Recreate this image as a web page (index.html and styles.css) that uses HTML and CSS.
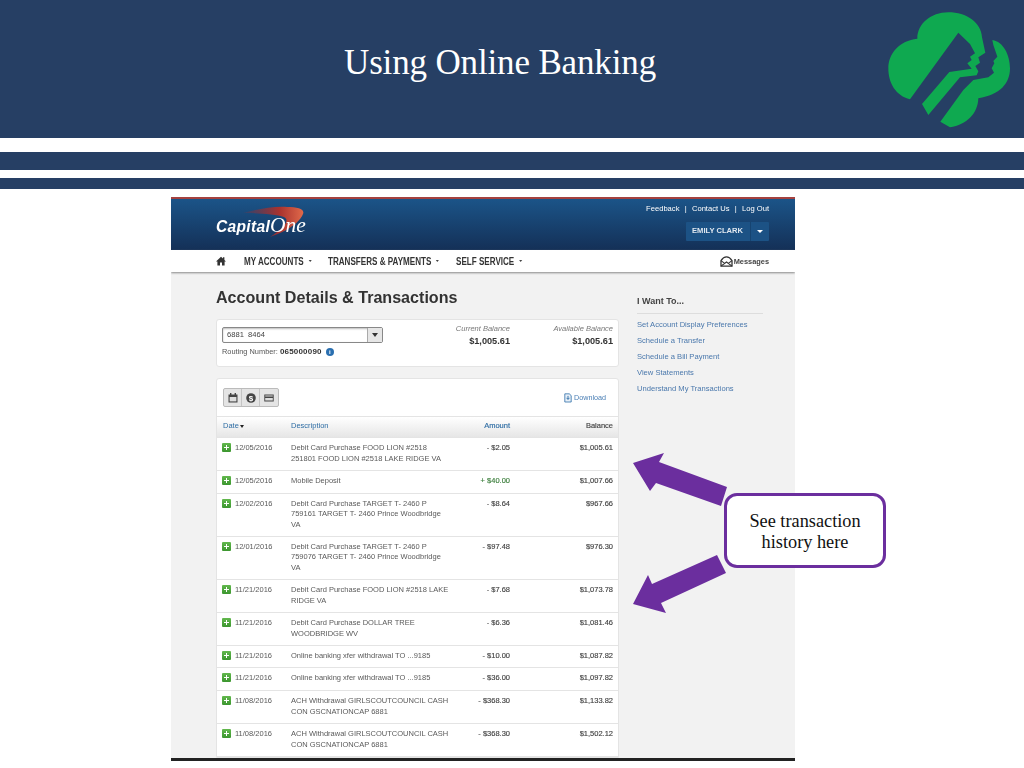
FILE: index.html
```html
<!DOCTYPE html>
<html lang="en">
<head>
<meta charset="utf-8">
<title>Using Online Banking</title>
<link rel="stylesheet" href="styles.css">
</head>
<body>
<div class="slide">
  <header class="banner">
    <h1 class="slide-title">Using Online Banking</h1>
    <svg class="trefoil" viewBox="0 0 492 420" aria-hidden="true">
      <path class="g" d="M150 298C108 288 85 250 85 205C85 160 118 122 172 116C172 72 212 37 265 37C320 37 364 68 366 112L376 158L355 172L360 188L346 198L355 214L350 226L300 232L205 345L186 312L268 216L335 206L322 190L335 180L330 170L345 160L330 132L295 98Z"/>
      <path class="g" d="M397 120C430 125 450 165 450 205C450 250 420 285 355 295C354 340 320 375 270 382L241 365L310 270L340 240L385 232L402 218L395 205L403 190L400 183L412 170L400 135Z"/>
    </svg>
  </header>
  <div class="band band-a"></div>
  <div class="band band-b"></div>
  <main class="stage">
    <section class="shot">
      <div class="topbar">
        <div class="brand"><span class="cap">Capital</span><span class="one">One</span>
          <svg class="swoosh" viewBox="0 0 70 34" aria-hidden="true">
            <defs><linearGradient id="sw" x1="0" x2="1" y1="0" y2="0"><stop offset="0" stop-color="#8a2f3a" stop-opacity=".2"/><stop offset=".6" stop-color="#a8322e"/><stop offset="1" stop-color="#e0694a"/></linearGradient></defs>
            <path fill="url(#sw)" d="M3 8C18 4 35 1 47 2C58 2 65 4 63 9C61 15 52 23 40 28L30 32C45 22 50 15 44 12C36 9 18 8 3 8Z"/>
          </svg>
        </div>
        <div class="top-right">
          <div class="util"><span>Feedback</span><i>|</i><span>Contact Us</span><i>|</i><span>Log Out</span></div>
          <div class="user"><span class="user-name">EMILY CLARK</span><span class="user-caret"></span></div>
        </div>
      </div>
      <nav class="nav">
        <svg class="home" viewBox="0 0 10 10" aria-hidden="true"><path d="M5 .8 0 5.4h1.4V9.6h2.6V6.6h2v3h2.6V5.4H10L8.4 3.9V1.2H7V2.6Z"/></svg>
        <span class="nav-item nav-a">MY ACCOUNTS</span>
        <span class="nav-item nav-b">TRANSFERS &amp; PAYMENTS</span>
        <span class="nav-item">SELF SERVICE</span>
        <span class="messages">
          <svg viewBox="0 0 14 12" aria-hidden="true"><path class="env" d="M1 5C3 2 5 1 7 1s4 1 6 4v6H1Z"/><path class="flap" d="M1 11 7 6.5 13 11M1 5l4 3M13 5 9 8"/></svg>Messages
        </span>
      </nav>
      <div class="content">
        <div class="main-col">
          <h2 class="page-title">Account Details &amp; Transactions</h2>
          <div class="card account">
            <div class="acct-left">
              <div class="select"><span class="select-val">6881 &nbsp;8464</span><span class="select-btn"></span></div>
              <div class="routing">Routing Number: <b>065000090</b><span class="info">i</span></div>
            </div>
            <div class="bal"><em>Current Balance</em><b>$1,005.61</b></div>
            <div class="bal bal-b"><em>Available Balance</em><b>$1,005.61</b></div>
          </div>
          <div class="card tx">
            <div class="tools">
              <div class="btns">
                <span class="tool"><svg viewBox="0 0 10 10" aria-hidden="true"><path d="M.5 1.5h9v8h-9Z M2 0h1.4v2H2Z M6.6 0H8v2H6.6Z"/><path class="cut" d="M1.6 4h6.8v4.4H1.6Z"/></svg></span>
                <span class="tool"><svg viewBox="0 0 10 10" aria-hidden="true"><circle cx="5" cy="5" r="4.8"/><text x="5" y="7.8" class="dollar">$</text></svg></span>
                <span class="tool"><svg viewBox="0 0 10 10" aria-hidden="true"><path d="M.3 1.5h9.4v7H.3Z"/><path class="cut" d="M1.2 2.4h7.6v1H1.2ZM1.2 5h7.6v2.6H1.2Z"/></svg></span>
              </div>
              <span class="download"><svg viewBox="0 0 10 12" aria-hidden="true"><path class="doc" d="M1 .8h5.6L9 3v8H1Z"/><path class="arr" d="M5 3.4v4M3.2 5.8 5 7.8l1.8-2"/></svg>Download</span>
            </div>
            <div class="row head">
              <span class="c-date link">Date<i class="sort"></i></span>
              <span class="c-desc link">Description</span>
              <span class="c-amt link">Amount</span>
              <span class="c-bal">Balance</span>
            </div>
            <div class="row r2"><span class="plus"></span><span class="c-date">12/05/2016</span><span class="c-desc">Debit Card Purchase FOOD LION #2518<br>251801 FOOD LION #2518 LAKE RIDGE VA</span><span class="c-amt">- $2.05</span><span class="c-bal">$1,005.61</span></div>
            <div class="row r1"><span class="plus"></span><span class="c-date">12/05/2016</span><span class="c-desc">Mobile Deposit</span><span class="c-amt pos">+ $40.00</span><span class="c-bal">$1,007.66</span></div>
            <div class="row r3"><span class="plus"></span><span class="c-date">12/02/2016</span><span class="c-desc">Debit Card Purchase TARGET T- 2460 P<br>759161 TARGET T- 2460 Prince Woodbridge<br>VA</span><span class="c-amt">- $8.64</span><span class="c-bal">$967.66</span></div>
            <div class="row r3"><span class="plus"></span><span class="c-date">12/01/2016</span><span class="c-desc">Debit Card Purchase TARGET T- 2460 P<br>759076 TARGET T- 2460 Prince Woodbridge<br>VA</span><span class="c-amt">- $97.48</span><span class="c-bal">$976.30</span></div>
            <div class="row r2"><span class="plus"></span><span class="c-date">11/21/2016</span><span class="c-desc">Debit Card Purchase FOOD LION #2518 LAKE<br>RIDGE VA</span><span class="c-amt">- $7.68</span><span class="c-bal">$1,073.78</span></div>
            <div class="row r2"><span class="plus"></span><span class="c-date">11/21/2016</span><span class="c-desc">Debit Card Purchase DOLLAR TREE<br>WOODBRIDGE WV</span><span class="c-amt">- $6.36</span><span class="c-bal">$1,081.46</span></div>
            <div class="row r1"><span class="plus"></span><span class="c-date">11/21/2016</span><span class="c-desc">Online banking xfer withdrawal TO ...9185</span><span class="c-amt">- $10.00</span><span class="c-bal">$1,087.82</span></div>
            <div class="row r1"><span class="plus"></span><span class="c-date">11/21/2016</span><span class="c-desc">Online banking xfer withdrawal TO ...9185</span><span class="c-amt">- $36.00</span><span class="c-bal">$1,097.82</span></div>
            <div class="row r2"><span class="plus"></span><span class="c-date">11/08/2016</span><span class="c-desc">ACH Withdrawal GIRLSCOUTCOUNCIL CASH<br>CON GSCNATIONCAP 6881</span><span class="c-amt">- $368.30</span><span class="c-bal">$1,133.82</span></div>
            <div class="row r2"><span class="plus"></span><span class="c-date">11/08/2016</span><span class="c-desc">ACH Withdrawal GIRLSCOUTCOUNCIL CASH<br>CON GSCNATIONCAP 6881</span><span class="c-amt">- $368.30</span><span class="c-bal">$1,502.12</span></div>
            <div class="row"></div>
          </div>
        </div>
        <aside class="side">
          <h3 class="side-title">I Want To...</h3>
          <a class="side-link">Set Account Display Preferences</a>
          <a class="side-link">Schedule a Transfer</a>
          <a class="side-link">Schedule a Bill Payment</a>
          <a class="side-link">View Statements</a>
          <a class="side-link">Understand My Transactions</a>
        </aside>
      </div>
    </section>
    <svg class="arrows" viewBox="620 440 120 180" aria-hidden="true">
      <path d="M633 463 664 453 659 462 727 487 721 506 656 483 650 491Z"/>
      <path d="M633 604 648 575 652 584 717 555 726 573 661 603 666 613Z"/>
    </svg>
    <div class="callout">See transaction<br>history here</div>
  </main>
</div>
</body>
</html>
```
FILE: styles.css
```css
* { box-sizing: border-box; }
html, body { margin: 0; padding: 0; background: #fff; }
.slide { width: 1024px; height: 768px; overflow: hidden; display: flex; flex-direction: column; background: #fff; font-family: "Liberation Sans", Arial, sans-serif; }
.banner { height: 138px; flex: none; background: #263f64; display: flex; justify-content: center; position: relative; }
.slide-title { margin: 43px 0 0 -24px; font: 400 35px/40px "Liberation Serif", serif; color: #fff; letter-spacing: -.15px; }
.trefoil { position: absolute; left: 860px; top: 0; width: 164px; height: 140px; }
.trefoil .g { fill: #0fa950; }
.band { flex: none; background: #263f64; }
.band-a { height: 18px; margin-top: 14px; }
.band-b { height: 11px; margin-top: 8px; }
.stage { flex: 1; position: relative; padding: 8px 0 0 171px; }
.shot { width: 624px; height: 564px; background: #f2f2f2; border-bottom: 3px solid #222; overflow: hidden; filter: blur(.3px); color: #555; }
.topbar { height: 53px; border-top: 2px solid #a5413f; background: linear-gradient(#1b5488, #143057); display: flex; justify-content: space-between; padding: 0 26px 0 45px; color: #fff; }
.brand { position: relative; width: 94px; padding-top: 18px; font-size: 15.6px; line-height: 17px; white-space: nowrap; }
.cap { font-weight: 700; font-style: italic; letter-spacing: .3px; position: relative; z-index: 1; }
.one { font: italic 400 21.5px/17px "Liberation Serif", serif; position: relative; z-index: 1; }
.swoosh { position: absolute; left: 24px; top: 6px; width: 70px; height: 34px; }
.top-right { display: flex; flex-direction: column; align-items: flex-end; padding-top: 5px; }
.util { font-size: 7.6px; line-height: 10px; display: flex; gap: 5.25px; }
.util i { font-style: normal; }
.user { margin: 8px 0 0; width: 83px; height: 19px; background: #1c5285; display: flex; font-size: 7.6px; font-weight: 700; line-height: 18px; border-radius: 1px; }
.user-name { flex: 1; padding-left: 6px; color: #dfe7ef; white-space: nowrap; }
.user-caret { width: 19px; border-left: 1px solid #164471; position: relative; }
.user-caret::after { content: ""; position: absolute; left: 6px; top: 8px; border: 3px solid transparent; border-top: 3px solid #fff; }
.nav { height: 22px; background: #fff; box-shadow: 0 1px 2px #888; display: flex; align-items: center; padding: 0 26px 0 45px; font-size: 10.5px; font-weight: 700; color: #333; position: relative; }
.home { width: 10px; height: 10px; fill: #333; margin-right: 18px; flex: none; }
.nav-item { white-space: nowrap; position: relative; transform: scaleX(.77); transform-origin: left center; flex: none; }
.nav-a { margin-right: 6px; }
.nav-b { margin-right: -5.5px; }
.nav-item::after { content: ""; position: absolute; right: -10px; top: 5px; border: 2px solid transparent; border-top: 2px solid #444; }
.messages { margin-left: auto; display: flex; align-items: center; font-size: 7.4px; font-weight: 700; color: #444; }
.messages svg { width: 13px; height: 11px; margin-right: 1px; }
.env { fill: #fff; stroke: #333; stroke-width: 1.4; }
.flap { fill: none; stroke: #333; stroke-width: 1.2; }
.content { display: flex; padding-left: 45px; }
.main-col { width: 403px; flex: none; }
.page-title { margin: 16px 0 12px; font-size: 16.1px; line-height: 19px; font-weight: 700; color: #333; white-space: nowrap; }
.card { background: #fff; border: 1px solid #e4e4e4; border-radius: 3px; }
.account { height: 48px; display: flex; padding: 7px 5px 0 5px; }
.acct-left { width: 161px; flex: none; }
.select { height: 16px; border: 1px solid #888; border-radius: 2px; display: flex; font-size: 7.6px; line-height: 14px; color: #444; box-shadow: inset 0 1px 2px #bbb; }
.select-val { flex: 1; padding-left: 4px; }
.select-btn { width: 15px; background: #e6e6e6; border-left: 1px solid #aaa; position: relative; }
.select-btn::after { content: ""; position: absolute; left: 4px; top: 5px; border: 3px solid transparent; border-top: 4px solid #333; }
.routing { font-size: 7.4px; line-height: 10px; margin-top: 4px; white-space: nowrap; display: flex; gap: 2px; align-items: center; }
.routing b { color: #333; font-size: 8px; letter-spacing: .2px; }
.info { width: 8px; height: 8px; margin-left: 2px; border-radius: 50%; background: #2a6fb0; color: #fff; font-size: 6px; line-height: 8px; text-align: center; font-weight: 700; }
.bal { width: 100px; flex: none; margin: -3px 0 0 27px; text-align: right; font-size: 7.5px; line-height: 10px; display: flex; flex-direction: column; }
.bal-b { margin-left: 3px; }
.bal em { color: #777; }
.bal b { font-size: 9.2px; line-height: 12px; margin-top: 1px; color: #333; }
.tx { margin-top: 11px; height: 380px; border-radius: 3px 3px 0 0; }
.tools { height: 37px; display: flex; justify-content: space-between; align-items: center; padding: 0 12px 0 6px; }
.btns { display: flex; border: 1px solid #bbb; border-radius: 2px; background: #e4e4e4; height: 19px; }
.tool { width: 18px; border-right: 1px solid #c4c4c4; display: flex; align-items: center; justify-content: center; }
.tool:last-child { border-right: 0; }
.tool svg { width: 10px; height: 10px; fill: #444; }
.tool .cut { fill: #ddd; }
.dollar { fill: #fff; font-size: 8px; font-weight: 700; text-anchor: middle; font-family: "Liberation Sans", sans-serif; }
.download { display: flex; align-items: center; font-size: 7.2px; color: #4a7fb5; gap: 2px; }
.download svg { width: 8px; height: 10px; }
.doc { fill: #e8f0f8; stroke: #2f6fa8; stroke-width: 1; }
.arr { fill: none; stroke: #2f6fa8; stroke-width: 1.2; }
.row { display: flex; font-size: 7.5px; line-height: 10.7px; padding: 5px 5px 0 6px; border-top: 1px solid #e4e4e4; position: relative; }
.c-date { width: 68px; padding-left: 12px; flex: none; color: #5a5a5a; }
.c-desc { width: 170px; flex: none; white-space: nowrap; color: #5a5a5a; }
.c-amt { width: 49px; flex: none; text-align: right; color: #444; white-space: nowrap; -webkit-text-stroke: .15px; }
.c-amt.pos { color: #3a7d3a; }
.c-bal { margin-left: auto; text-align: right; color: #444; -webkit-text-stroke: .15px; }
.r1 { height: 22.5px; }
.r2 { height: 33px; }
.r3 { height: 43.2px; }
.head { height: 21px; padding-top: 4px; background: linear-gradient(#fff, #e6e6e6); }
.head .c-date { padding-left: 0; }
.head .link { color: #2e6da4; }
.sort { display: inline-block; margin-left: 1px; border: 2.5px solid transparent; border-top: 3px solid #222; vertical-align: -2px; }
.plus { position: absolute; left: 5px; top: 5px; width: 9px; height: 9px; border-radius: 1px; background: linear-gradient(#62b84d, #3c962f); }
.plus::before { content: ""; position: absolute; left: 2px; top: 4px; width: 5px; height: 1px; background: #fff; }
.plus::after { content: ""; position: absolute; left: 4px; top: 2px; width: 1px; height: 5px; background: #fff; }
.side { width: 126px; margin-left: 18px; padding-top: 24px; }
.side-title { margin: 0 0 3px; padding-bottom: 6px; border-bottom: 1px solid #ddd; font-size: 9px; line-height: 11px; font-weight: 700; color: #444; }
.side-link { display: block; font-size: 7.6px; line-height: 16px; color: #4a78ac; white-space: nowrap; }
.arrows { position: absolute; left: 620px; top: 251px; width: 120px; height: 180px; fill: #6b2e9e; }
.callout { position: absolute; left: 724px; top: 304px; width: 162px; height: 75px; padding-top: 2px; border: 3px solid #6b2e9e; border-radius: 13px; background: #fff; display: flex; align-items: center; justify-content: center; text-align: center; font: 400 18.3px/21px "Liberation Serif", serif; color: #111; }
```
